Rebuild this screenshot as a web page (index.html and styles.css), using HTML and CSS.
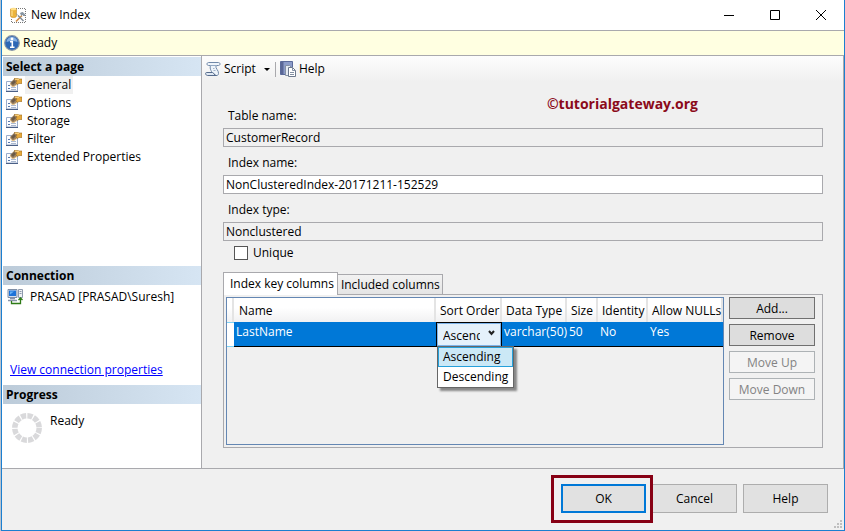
FILE: index.html
```html
<!DOCTYPE html>
<html lang="en">
<head>
<meta charset="utf-8">
<title>New Index</title>
<link rel="stylesheet" href="styles.css">
</head>
<body>
<svg class="defs" aria-hidden="true">
  <symbol id="page-icon" viewBox="0 0 16 16">
    <path d="M.5 4.500h11v9.500H.5z" fill="#fbfcfe" stroke="#9aaccb"/>
    <path d="M0 14.500h12" stroke="#4a5f86"/>
    <path d="M2 8.500h2M2 11.500h2" stroke="#5878ac"/>
    <path d="M5 10.500h5M5 12.500h5" stroke="#aab8d0"/>
    <path d="M4 6l4-4h3v5l-3 2.500H6z" fill="#a08562"/>
    <path d="M5 6l3-3 2 2-3 3z" fill="#6a5a48"/>
    <path d="M4 7l2 2.500h2l3-2" fill="none" stroke="#e8c690"/>
    <path d="M8 1.500h4l1 .5h3v4.500h-3l-2 1-1-2 1-1.500z" fill="#e6a93c" stroke="#9b6c22" stroke-width=".6"/>
    <path d="M9 2.300h4" stroke="#ffd98a"/>
  </symbol>
</svg>
<div class="window">
  <header class="titlebar">
    <svg class="app-icon" viewBox="0 0 16 17" aria-hidden="true">
      <path d="M6 1.500h9.500v14H1.500V11" fill="none" stroke="#777" stroke-dasharray="1 1"/>
      <path d="M.5 2v7c0 2 6 2 6 0V2z" fill="#edb43b" stroke="#c88a24" stroke-width=".6"/>
      <ellipse cx="3.500" cy="2" rx="3" ry="1.300" fill="#ffdf88"/>
      <path d="M2 3.500v5.500" stroke="#ffe7a2"/>
      <path d="M6 14.500l6-6" stroke="#d18b43" stroke-width="1.600"/>
      <path d="M8 8.500l5.500 5.500" stroke="#7f8994" stroke-width="1.400"/>
      <path d="M6 6.500l2 2M10.500 6l2.500-.5 2 2.500-1 1-1.500-1.500-1 1z" fill="#8897a6" stroke="#7d8b98" stroke-width=".8"/>
    </svg>
    <h1>New Index</h1>
    <div class="window-controls">
      <button aria-label="Minimize"><svg viewBox="0 0 12 12"><path d="M1 6.500h10"/></svg></button>
      <button aria-label="Maximize"><svg viewBox="0 0 12 12"><path d="M1.500 1.500h9v9h-9z"/></svg></button>
      <button aria-label="Close"><svg viewBox="0 0 12 12"><path d="M1 1l10 10M11 1L1 11"/></svg></button>
    </div>
  </header>
  <div class="status">
    <svg viewBox="0 0 16 16" aria-hidden="true">
      <circle cx="8" cy="8" r="7.300" fill="#2c67b5" stroke="#8795a8" stroke-width="1.200"/>
      <path d="M2.500 7a5.500 5 0 0 1 11 0q-5-2-11 0" fill="#84aee1"/>
      <circle cx="8" cy="4" r="1.400" fill="#fff"/>
      <path d="M6 6.800h2.300V12M6 12.200h4.500" fill="none" stroke="#fff" stroke-width="1.600"/>
    </svg>
    <span>Ready</span>
  </div>
  <div class="body">
    <aside class="sidebar">
      <section class="pages">
        <h2>Select a page</h2>
        <nav>
          <a href="#general" class="current"><svg><use href="#page-icon"/></svg><span>General</span></a>
          <a href="#options"><svg><use href="#page-icon"/></svg><span>Options</span></a>
          <a href="#storage"><svg><use href="#page-icon"/></svg><span>Storage</span></a>
          <a href="#filter"><svg><use href="#page-icon"/></svg><span>Filter</span></a>
          <a href="#extended"><svg><use href="#page-icon"/></svg><span>Extended Properties</span></a>
        </nav>
      </section>
      <section class="connection">
        <h2>Connection</h2>
        <p class="server">
          <svg viewBox="0 0 17 17" aria-hidden="true">
            <path d="M1 1.500h9v8H1z" fill="#d7e0ee" stroke="#7e8ea6"/>
            <path d="M2 2.500h7v5.500H2z" fill="#1d72d8"/>
            <path d="M3 3.500h4l-4 3z" fill="#65b2f7"/>
            <path d="M3 10.500h5M1 12.500h9" stroke="#8994aa" stroke-width="1.500"/>
            <path d="M11.500 1.500h4v8h-4z" fill="#eef1f5" stroke="#8d99ad"/>
            <path d="M12.500 3.500h2M12.500 5.500h2" stroke="#8d99ad"/>
            <path d="M4.500 13v2.500h9V10M11.500 12l2-2 2 2" fill="none" stroke="#2e7a16" stroke-width="1.300"/>
          </svg>
          <span>PRASAD [PRASAD\Suresh]</span>
        </p>
        <a class="view-link" href="#connection">View connection properties</a>
      </section>
      <section class="progress">
        <h2>Progress</h2>
        <p class="progress-state">
          <svg viewBox="0 0 30 30" aria-hidden="true"><circle cx="15" cy="15" r="12.200" fill="none" stroke="#d9d9db" stroke-width="5.500" stroke-dasharray="5.190 1.200"/></svg>
          <span>Ready</span>
        </p>
      </section>
    </aside>
    <main>
      <div class="toolbar">
        <button>
          <svg viewBox="0 0 16 16" aria-hidden="true">
            <path d="M3.500 1.500h10c2 0 2 3 0 3H11c-1 3 3 5 2.500 8 0 1.500-1 2-2 2H5c3-1 2-3 1-5s-1-3-.500-5h-2c-2 0-2-3 0-3z" fill="#eef4fa" stroke="#7088a8"/>
            <path d="M5.500 4.500H12" stroke="#93a8c2"/>
            <path d="M8 7.500h1.500M8.500 9.500h2" stroke="#a4b5cb"/>
            <path d="M1.500 11.500h6c1.500 0 1.500 3 4 3h-9c-2 0-2.500-3-1-3z" fill="#dfe8f3" stroke="#566c8d"/>
          </svg>
          <span>Script</span><i class="caret"></i>
        </button>
        <span class="divider"></span>
        <button>
          <svg viewBox="0 0 16 16" aria-hidden="true">
            <path d="M.5.500h12v13H.5z" fill="#8c9cc9" stroke="#5b6a9b"/>
            <path d="M1 1h2.500v12H1z" fill="#5a6796"/>
            <path d="M5.500 4.500h4l2 2v8h-6z" fill="#e6ebf3" stroke="#8490a3"/>
            <path d="M8.500 6.500h4l3 3v6h-7z" fill="#fff" stroke="#6c788c"/>
            <path d="M12.500 6.500v3h3M10 11.500h4M10 13.500h4" fill="none" stroke="#8490a3"/>
          </svg>
          <span>Help</span>
        </button>
      </div>
      <p class="watermark">©tutorialgateway.org</p>
      <form class="general">
        <label for="table-name">Table name:</label>
        <input id="table-name" type="text" value="CustomerRecord" readonly>
        <label for="index-name">Index name:</label>
        <input id="index-name" type="text" value="NonClusteredIndex-20171211-152529">
        <label for="index-type">Index type:</label>
        <input id="index-type" type="text" value="Nonclustered" readonly>
        <div class="unique"><input id="unique" type="checkbox"><label for="unique">Unique</label></div>
        <div class="tabs" role="tablist">
          <button type="button" role="tab" aria-selected="true">Index key columns</button>
          <button type="button" role="tab" aria-selected="false">Included columns</button>
        </div>
        <div class="panel" role="tabpanel">
          <div class="grid">
            <table>
              <colgroup><col class="c-mark"><col><col class="c-sort"><col class="c-type"><col class="c-size"><col class="c-identity"><col class="c-nulls"></colgroup>
              <thead><tr><th></th><th>Name</th><th>Sort Order</th><th>Data Type</th><th>Size</th><th>Identity</th><th>Allow NULLs</th></tr></thead>
              <tbody><tr>
                <td></td><td>LastName</td>
                <td class="sort">
                  <select aria-label="Sort order"><option>Ascending</option><option>Descending</option></select>
                  <svg class="chevron" viewBox="0 0 7 6" aria-hidden="true"><path d="M1 1l2.500 3L6 1"/></svg>
                  <ul role="listbox" aria-label="Sort order choices"><li role="option" aria-selected="true">Ascending</li><li role="option" aria-selected="false">Descending</li></ul>
                </td>
                <td>varchar(50)</td><td>50</td><td>No</td><td>Yes</td>
              </tr></tbody>
            </table>
          </div>
          <div class="actions">
            <button type="button">Add...</button>
            <button type="button">Remove</button>
            <button type="button" disabled>Move Up</button>
            <button type="button" disabled>Move Down</button>
          </div>
        </div>
      </form>
    </main>
  </div>
  <footer>
    <div class="highlight"><button class="default">OK</button></div>
    <button class="cancel">Cancel</button>
    <button>Help</button>
    <svg class="grip" viewBox="0 0 8 8" aria-hidden="true"><path d="M6 0h2v2H6zM3 3h2v2H3zM6 3h2v2H6zM0 6h2v2H0zM3 6h2v2H3zM6 6h2v2H6z"/></svg>
  </footer>
</div>
</body>
</html>
```

FILE: styles.css
```css
* { box-sizing: border-box; }

body {
  margin: 0;
  background: #b9c3cf;
  font: 12px/16px "Open Sans", "Noto Sans", sans-serif;
  color: #000;
}

h1, h2, p, ul { margin: 0; padding: 0; font-size: 12px; }
h1, p { font-weight: 400; }
button, input, select { font: inherit; color: inherit; margin: 0; border-radius: 0; }
svg { flex: none; }
.defs { position: absolute; width: 0; height: 0; }

.window {
  display: flex;
  flex-direction: column;
  min-height: 100vh;
  margin-left: 1px;
  border: solid #1c7fd0;
  border-width: 0 1px 1px;
  background: #f0f0f0;
}

/* Title bar and status strip */
.titlebar {
  display: flex;
  align-items: center;
  height: 30px;
  padding-left: 8px;
  background: #fff;
}
.app-icon { width: 16px; height: 17px; margin-right: 5px; }
.window-controls { display: flex; margin-left: auto; }
.window-controls button {
  display: grid;
  place-items: center;
  width: 46px;
  height: 30px;
  padding: 0;
  border: 0;
  background: none;
}
.window-controls svg { width: 12px; height: 12px; fill: none; stroke: #000; }

.status {
  display: flex;
  align-items: center;
  gap: 3px;
  height: 26px;
  padding-left: 2px;
  border: solid #a9a9ad;
  border-width: 1px 0;
  background: #ffffe1;
}
.status svg { width: 16px; height: 16px; }

/* Page list, connection and progress */
.body { display: flex; flex: 1; border: solid #a9a9ad; border-width: 0 1px 1px 0; }
.sidebar {
  display: flex;
  flex-direction: column;
  flex: none;
  width: 200px;
  padding: 1px 0 0 1px;
  border-right: 1px solid #a9a9ad;
  background: #fff;
}
.sidebar h2 {
  height: 19px;
  padding: 2px 3px 1px;
  background: linear-gradient(90deg, #bccbd9, #d6e5f3);
  font-weight: 700;
}
.pages { flex: 1; }
.pages a {
  display: flex;
  align-items: center;
  gap: 3px;
  height: 18px;
  padding-left: 3px;
  color: #000;
  text-decoration: none;
}
.pages svg { width: 16px; height: 16px; }
.pages span { padding: 0 2px; line-height: 18px; }
.pages .current span { background: #f0f0f0; }
.connection { height: 119px; }
.server { display: flex; align-items: center; gap: 6px; padding: 3px 4px; }
.server svg { width: 17px; height: 17px; }
.view-link { display: block; margin: 54px 7px 0; color: #00f; }
.progress { height: 83px; }
.progress-state { display: flex; gap: 8px; padding: 9px; }
.progress-state svg { width: 30px; height: 30px; }

/* Toolbar */
main { flex: 1; min-width: 0; }
.toolbar {
  display: flex;
  align-items: center;
  height: 26px;
  padding: 0 3px;
  border-radius: 0 0 2px 0;
  background: linear-gradient(#fdfdfd, #f0f0f0);
}
.toolbar button {
  display: flex;
  align-items: center;
  gap: 3px;
  padding: 0;
  border: 0;
  background: none;
}
.toolbar svg { width: 16px; height: 16px; }
.caret { margin: 1px 5px 0; border: 3px solid transparent; border-top-color: #000; border-bottom: 0; }
.divider { width: 1px; height: 15px; margin: 0 4px 0 0; background: #a9a9ad; }
.watermark {
  height: 26px;
  padding: 13px 145px 0 0;
  color: #8b0a1a;
  font-size: 14px;
  font-weight: 700;
  line-height: 18px;
  text-align: right;
}

/* General page */
.general { padding: 0 20px 20px 21px; }
.general > label { display: block; height: 20px; padding-left: 5px; }
.general > input {
  display: block;
  width: 100%;
  height: 19px;
  margin-bottom: 8px;
  padding: 0 2px;
  border: 1px solid #a9a9ad;
  background: #fff;
}
.general > input[readonly] { background: #f0f0f0; }
.unique { display: flex; align-items: center; gap: 5px; margin: -4px 0 11px 11px; }
.unique input { appearance: none; width: 14px; height: 14px; border: 1px solid #555; background: #fff; }

.tabs { display: flex; align-items: flex-end; }
.tabs button {
  height: 20px;
  padding: 0 2px 0 3px;
  border: 1px solid #a9a9ad;
  border-bottom: 0;
  background: linear-gradient(#f2f2f2, #e4e4e4);
}
.tabs [aria-selected="true"] {
  z-index: 1;
  height: 23px;
  margin-bottom: -1px;
  padding: 0 3px 0 6px;
  background: #fff;
}
.tabs [aria-selected="false"] { border-left: 0; }
.panel { display: flex; gap: 5px; height: 154px; padding: 2px 7px 2px 2px; border: 1px solid #a9a9ad; }

.grid { flex: 1; min-width: 0; border: 1px solid #6487b3; }
table { width: 100%; border-collapse: separate; border-spacing: 0; table-layout: fixed; }
.c-mark { width: 7px; }
.c-sort { width: 66px; }
.c-type { width: 65px; }
.c-size { width: 31px; }
.c-identity { width: 50px; }
.c-nulls { width: 75px; }
th {
  height: 24px;
  padding: 2px 0 0 5px;
  border-right: 2px solid #e4e4e4;
  background: linear-gradient(#fff 40%, #f1f1f2);
  font-weight: 400;
  text-align: left;
  white-space: nowrap;
}
th:nth-child(n+3) { padding-left: 4px; }
td {
  height: 25px;
  padding: 2px 0 0 2px;
  border-bottom: 1px solid #000;
  background: #0078d7;
  color: #fff;
  vertical-align: top;
  white-space: nowrap;
}
td:first-child { border: solid #7fd3f5; border-width: 1px 0; background: #fff; }
.sort { position: relative; padding: 0; border: 1px solid #000; }
select {
  display: block;
  appearance: none;
  width: 100%;
  height: 23px;
  padding: 3px 20px 0 5px;
  border: 1px solid #7eb4ea;
  background: #e5f1fb;
  color: #000;
}
.chevron {
  position: absolute;
  top: 7px;
  right: 6px;
  width: 7px;
  height: 6px;
  fill: none;
  stroke: #222;
  stroke-width: 2;
}
.sort ul {
  position: absolute;
  z-index: 2;
  top: 100%;
  left: 0;
  border: 1px solid #666;
  background: #fff;
  box-shadow: 3px 3px 2px #888;
  color: #000;
  list-style: none;
}
.sort li { height: 20px; padding: 1px 4px; border: 1px solid transparent; }
.sort [aria-selected="true"] { border-color: #26a0da; background: #cbe8f6; }

.actions { display: flex; flex-direction: column; gap: 5px; width: 86px; }
.actions button { height: 22px; padding: 1px 0 0; border: 1px solid #707070; background: #ddd; }
.actions button:disabled { border-color: #adb2b5; background: #f4f4f4; color: #838383; }

/* Dialog buttons */
footer { display: flex; align-items: flex-start; justify-content: flex-end; position: relative; height: 61px; padding: 6px 16px 0 0; }
footer button { width: 85px; height: 29px; margin: 9px 0 0 6px; padding: 0; border: 1px solid #adadad; background: #e1e1e1; }
.highlight { z-index: 1; padding: 6px 4px 7px 7px; border: 3px solid #870014; }
.highlight button { display: block; margin: 0; border: 2px solid #0078d7; }
footer .cancel { margin-left: -1px; }
.grip { position: absolute; right: 2px; bottom: 2px; width: 8px; height: 8px; fill: #bfbfbf; }
```
